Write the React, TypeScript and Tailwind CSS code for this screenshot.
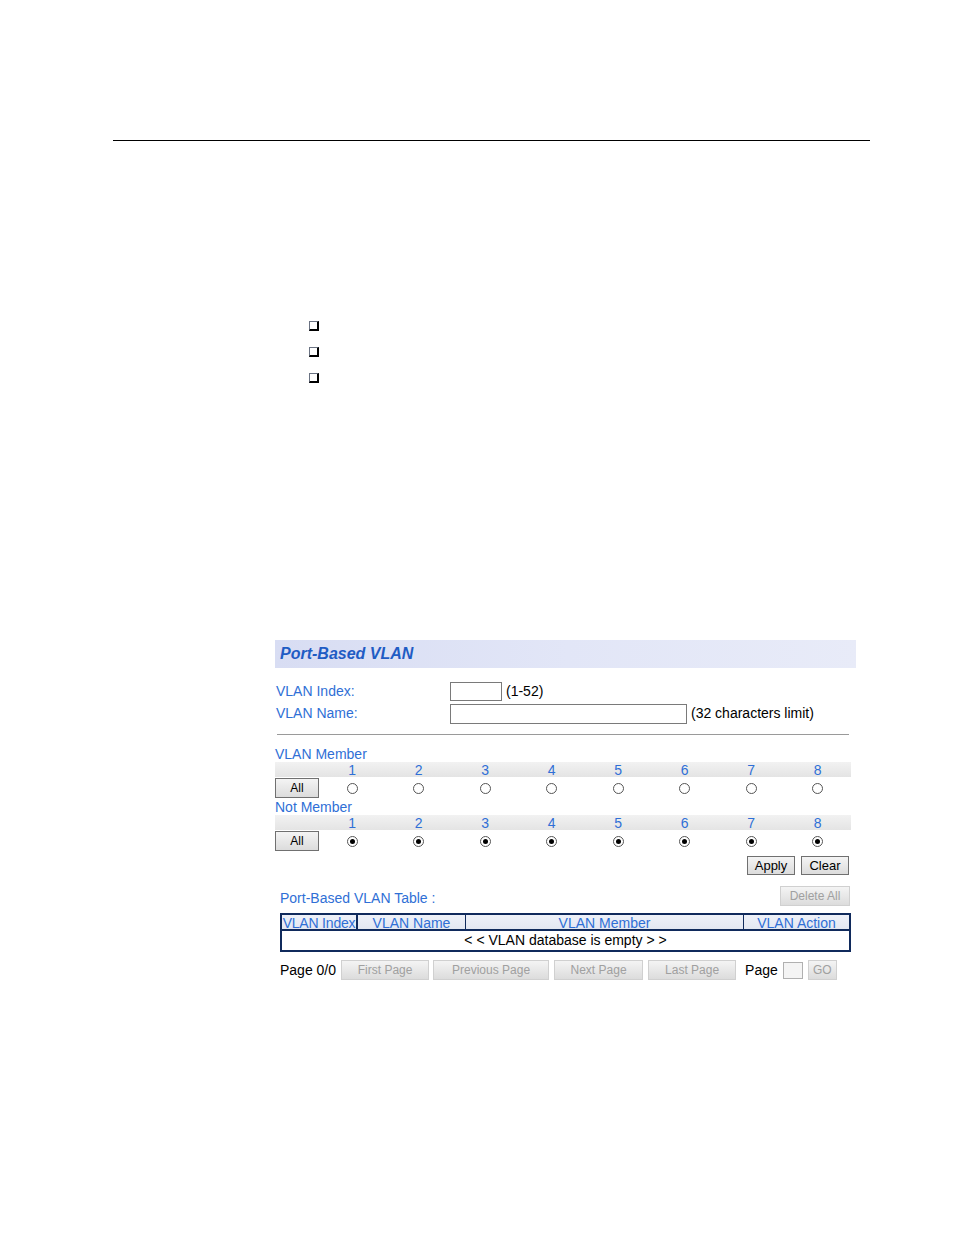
import React from "react";

const ports = [1, 2, 3, 4, 5, 6, 7, 8];

function Bullet() {
  return <div className="w-[10px] h-[10px] border-t border-l border-gray-500 border-r-2 border-b-2 border-r-black border-b-black" />;
}

function Btn({ children, className = "", disabled = false }: { children: React.ReactNode; className?: string; disabled?: boolean }) {
  return (
    <button
      className={
        "h-[20px] flex items-center justify-center text-[12px] leading-none bg-gradient-to-b from-[#f4f4f4] to-[#dcdcdc] " +
        (disabled ? "border border-[#d0d0d0] text-[#a0a0a0] " : "border border-[#707070] text-black ") +
        className
      }
    >
      {children}
    </button>
  );
}

function Radio({ on }: { on: boolean }) {
  return (
    <div className="w-[11px] h-[11px] rounded-full border border-[#555] bg-white flex items-center justify-center">
      {on && <div className="w-[5px] h-[5px] rounded-full bg-black" />}
    </div>
  );
}

function PortRows({ label, on, top }: { label: string; on: boolean; top: string }) {
  return (
    <div className={top}>
      <div className="text-[14px] leading-[16px] text-[#2f6fd6]">{label}</div>
      <div className="flex h-[15px] bg-gradient-to-b from-[#f2f2f2] to-[#e4e4e4] w-[576px]">
        <div className="w-[44px]" />
        {ports.map((p) => (
          <div key={p} className="w-[66.5px] text-center text-[14px] leading-[16px] text-[#2f6fd6]">
            {p}
          </div>
        ))}
      </div>
      <div className="flex items-center h-[22px] w-[576px]">
        <Btn className="w-[44px]">All</Btn>
        {ports.map((p) => (
          <div key={p} className="w-[66.5px] flex justify-center">
            <Radio on={on} />
          </div>
        ))}
      </div>
    </div>
  );
}

export default function App() {
  return (
    <div className="w-[954px] h-[1235px] bg-white relative" style={{ fontFamily: '"Liberation Sans", Arial, sans-serif' }}>
      <div className="pt-[140px] pl-[113px]">
        <div className="w-[757px] h-[1px] bg-black" />
      </div>

      <div className="ml-[309px] mt-[180px] flex flex-col gap-[16px]">
        <Bullet />
        <Bullet />
        <Bullet />
      </div>

      <div className="ml-[275px] mt-[257px] w-[581px]">
        <div className="h-[28px] bg-gradient-to-r from-[#d8ddf3] via-[#e2e6f7] to-[#e8ebf8] flex items-center pl-[5px]">
          <span className="text-[16px] font-bold italic text-[#1f5cc4]">Port-Based VLAN</span>
        </div>

        <div className="mt-[14px] flex items-center h-[18px]">
          <span className="w-[175px] pl-[1px] text-[14px] text-[#2f6fd6]">VLAN Index:</span>
          <div className="w-[52px] h-[19px] border border-[#7a7a7a] bg-white" />
          <span className="ml-[4px] text-[14px] text-black">(1-52)</span>
        </div>
        <div className="mt-[4px] flex items-center h-[19px]">
          <span className="w-[175px] pl-[1px] text-[14px] text-[#2f6fd6]">VLAN Name:</span>
          <div className="w-[237px] h-[20px] border border-[#7a7a7a] bg-white" />
          <span className="ml-[4px] text-[14px] text-black">(32 characters limit)</span>
        </div>

        <div className="mt-[11px] ml-[2px] w-[572px] h-[1px] bg-[#9a9a9a]" />

        <PortRows label="VLAN Member" on={false} top="mt-[11px]" />
        <PortRows label="Not Member" on={true} top="mt-[0px]" />

        <div className="mt-[4px] flex justify-end gap-[6px] pr-[7px]">
          <Btn className="w-[48px] !h-[19px] text-[13px]">Apply</Btn>
          <Btn className="w-[48px] !h-[19px] text-[13px]">Clear</Btn>
        </div>

        <div className="mt-[7px] flex items-center justify-between pl-[5px] pr-[6px]">
          <span className="text-[14px] text-[#2f6fd6] mt-[6px]">Port-Based VLAN Table :</span>
          <Btn disabled className="w-[70px] text-[11px]">Delete All</Btn>
        </div>

        <div className="mt-[4px] ml-[5px] w-[571px] border-2 border-[#102a5c]">
          <div className="flex h-[16px] text-[14px] leading-[16px] text-[#2f6fd6] bg-gradient-to-b from-[#eef1f8] to-[#e3e7f1] border-b-2 border-[#102a5c]">
            <div className="w-[76px] text-center border-r-2 border-[#102a5c] whitespace-nowrap tracking-[-0.2px]">VLAN Index</div>
            <div className="w-[108px] text-center border-r border-[#102a5c]">VLAN Name</div>
            <div className="w-[278px] text-center border-r border-[#102a5c]">VLAN Member</div>
            <div className="flex-1 text-center">VLAN Action</div>
          </div>
          <div className="h-[19px] text-center text-[14px] leading-[19px] text-black">&lt; &lt; VLAN database is empty &gt; &gt;</div>
        </div>

        <div className="mt-[8px] ml-[5px] flex items-center h-[20px]">
          <span className="text-[14px] text-black">Page 0/0</span>
          <Btn disabled className="ml-[5px] w-[88px] text-[12px]">First Page</Btn>
          <Btn disabled className="ml-[4px] w-[116px] text-[12px]">Previous Page</Btn>
          <Btn disabled className="ml-[5px] w-[89px] text-[12px]">Next Page</Btn>
          <Btn disabled className="ml-[5px] w-[88px] text-[12px]">Last Page</Btn>
          <span className="ml-[9px] text-[14px] text-black">Page</span>
          <div className="ml-[5px] w-[20px] h-[17px] border border-[#b0b0b0] bg-[#f4f4f4]" />
          <Btn disabled className="ml-[5px] w-[29px] text-[12px]">GO</Btn>
        </div>
      </div>
    </div>
  );
}
